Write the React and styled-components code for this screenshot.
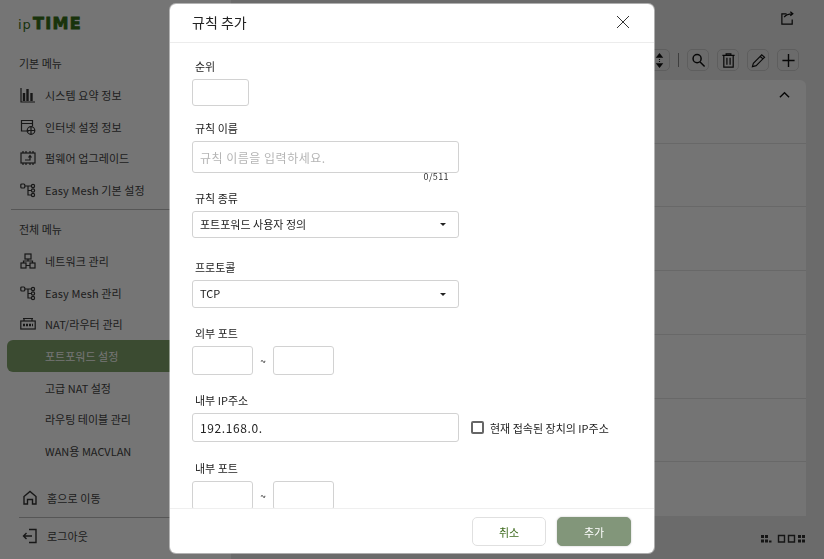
import React from "react";
import styled, { createGlobalStyle } from "styled-components";

const GlobalStyle = createGlobalStyle`
  html, body {
    margin: 0;
    height: 100%;
    overflow: hidden;
  }
  body, input {
    font-family: "Noto Sans CJK KR", "Noto Sans", sans-serif;
  }
  #root {
    height: 100%;
  }
  * {
    box-sizing: border-box;
  }
`;

const Page = styled.div`
  display: flex;
  height: 559px;
  width: 824px;
  background: #eaeaea;
  overflow: hidden;
`;

const Sidebar = styled.aside`
  width: 231px;
  flex: none;
  background: #fff;
  display: flex;
  flex-direction: column;
  > * {
    flex: none;
  }
`;

const Logo = styled.div`
  display: flex;
  align-items: baseline;
  height: 30px;
  margin: 9px 0 0 18px;
  color: #37701a;
  line-height: 30px;
`;

const LogoThin = styled.span`
  font-family: "DejaVu Sans", sans-serif;
  font-size: 13px;
  letter-spacing: 1px;
  width: 15px;
`;

const LogoBold = styled.span`
  font-family: "DejaVu Sans", sans-serif;
  font-size: 16px;
  font-weight: 700;
  letter-spacing: 1.3px;
  -webkit-text-stroke: 0.8px #37701a;
`;

const MenuTitle = styled.div`
  font-size: 11px;
  line-height: 16px;
  color: #444;
  margin: ${(p) => p.$top}px 0 8px 19px;
`;

const MenuItem = styled.div`
  display: flex;
  align-items: center;
  gap: 9px;
  height: 31.7px;
  padding-left: ${(p) => p.$pad || 20}px;
  font-size: 11px;
  color: #444;
  letter-spacing: 0.1px;
  svg {
    width: 16px;
    height: 16px;
    flex: none;
  }
`;

const SubItem = styled.div`
  display: flex;
  align-items: center;
  height: 31.6px;
  margin-left: 7px;
  padding-left: 38px;
  font-size: 11px;
  border-radius: 6px 0 0 6px;
  color: ${(p) => (p.$active ? "#fff" : "#444")};
  background: ${(p) => (p.$active ? "#80a36c" : "transparent")};
`;

const SideDivider = styled.hr`
  border: 0;
  border-top: 1px solid #bbb;
  margin: ${(p) => p.$top}px 0 ${(p) => p.$bottom || 0}px ${(p) => p.$left}px;
`;

const SideBottom = styled.div`
  margin-top: 15.2px;
`;

const Main = styled.main`
  flex: 1;
  min-width: 0;
  padding: 10px 18px 0 12px;
  display: flex;
  flex-direction: column;
  > * {
    flex: none;
  }
`;

const TopBar = styled.div`
  height: 39px;
  display: flex;
  justify-content: flex-end;
  padding: 1px 11px 0 0;
  svg {
    width: 15px;
    height: 15px;
  }
`;

const Toolbar = styled.div`
  height: 22px;
  display: flex;
  justify-content: flex-end;
  align-items: center;
  gap: 8px;
  padding-right: 7px;
`;

const ToolButton = styled.button`
  width: 22px;
  height: 22px;
  padding: 0;
  display: flex;
  align-items: center;
  justify-content: center;
  background: transparent;
  border: 1px solid #ccc;
  border-radius: 5px;
  svg {
    width: 15px;
    height: 15px;
  }
`;

const ToolSeparator = styled.span`
  width: 1px;
  height: 14px;
  background: #888;
`;

const Card = styled.section`
  margin-top: 9px;
  height: 436px;
  background: #fdfdfd;
  border-radius: 6px 6px 0 0;
  display: flex;
  flex-direction: column;
  overflow: hidden;
  > * {
    flex: none;
  }
`;

const CardHead = styled.div`
  height: 63.5px;
  display: flex;
  justify-content: flex-end;
  padding: 9px 15px 0 0;
  border-bottom: 1px solid #e2e2e2;
  svg {
    width: 13px;
    height: 11px;
  }
`;

const CardRow = styled.div`
  height: 63.8px;
  border-bottom: 1px solid #e2e2e2;
  &:last-child {
    border-bottom: 0;
  }
`;

const Pager = styled.div`
  display: flex;
  justify-content: flex-end;
  margin-top: 18px;
  svg {
    width: 46px;
    height: 10px;
  }
`;

const Overlay = styled.div`
  position: fixed;
  inset: 0;
  background: rgba(0, 0, 0, 0.54);
  display: flex;
  justify-content: center;
  align-items: flex-start;
  padding-top: 4px;
`;

const Modal = styled.div`
  width: 484px;
  height: 549px;
  background: #fff;
  border-radius: 6px;
  box-shadow: 0 0 0 1px rgba(255, 255, 255, 0.45);
  display: flex;
  flex-direction: column;
  overflow: hidden;
`;

const ModalHead = styled.header`
  height: 39px;
  flex: none;
  display: flex;
  align-items: center;
  justify-content: space-between;
  padding: 0 24px 0 22px;
  border-bottom: 1px solid #ececec;
`;

const ModalTitle = styled.h2`
  margin: 0 0 2px;
  font-size: 14px;
  font-weight: 400;
  color: #222;
`;

const CloseIcon = styled.svg`
  width: 14px;
  height: 14px;
  margin-top: -3px;
`;

const ModalBody = styled.div`
  flex: 1;
  min-height: 0;
  overflow: hidden;
  padding: 16px 0 0 22px;
`;

const Field = styled.div`
  margin-bottom: ${(p) => p.$gap}px;
`;

const Label = styled.div`
  font-size: 11px;
  line-height: 14px;
  margin: 0 0 6px 3px;
  color: #222;
`;

const TextBox = styled.input`
  display: block;
  width: ${(p) => p.$w}px;
  height: ${(p) => p.$h}px;
  padding: 0 7px;
  border: 1px solid #d2d2d2;
  border-radius: 3px;
  background: #fff;
  outline: none;
  font-size: ${(p) => p.$fs || 11}px;
  letter-spacing: ${(p) => p.$ls || 0}px;
  color: #222;
  &::placeholder {
    color: #b5b5b5;
    opacity: 1;
  }
`;

const Counter = styled.div`
  width: 257px;
  text-align: right;
  font-size: 9px;
  line-height: 10px;
  letter-spacing: 0.4px;
  margin-top: -1px;
  color: #333;
`;

const SelectBox = styled.div`
  width: 267px;
  height: ${(p) => p.$h}px;
  display: flex;
  align-items: center;
  justify-content: space-between;
  padding: 0 12px 2px 7px;
  border: 1px solid #d2d2d2;
  border-radius: 3px;
  font-size: 11px;
  color: #222;
`;

const Caret = styled.span`
  width: 0;
  height: 0;
  margin-top: 2px;
  border-left: 3.5px solid transparent;
  border-right: 3.5px solid transparent;
  border-top: 3.5px solid #222;
`;

const PortRow = styled.div`
  display: flex;
  align-items: center;
`;

const Tilde = styled.span`
  width: 20px;
  text-align: center;
  font-size: 10px;
  color: #222;
`;

const CheckWrap = styled.label`
  display: flex;
  align-items: center;
  margin-left: 12px;
  font-size: 11px;
  color: #222;
`;

const CheckBox = styled.span`
  width: 13px;
  height: 13px;
  margin-right: 6px;
  border: 2px solid #666;
  border-radius: 2px;
`;

const ModalFoot = styled.footer`
  height: 45px;
  flex: none;
  display: flex;
  justify-content: flex-end;
  align-items: flex-start;
  gap: 11px;
  padding: 8px 23px 0 0;
  border-top: 1px solid #efefef;
`;

const FootButton = styled.button`
  width: 74px;
  height: 29px;
  padding: 0;
  border-radius: 5px;
  font-family: inherit;
  font-size: 11px;
  border: 1px solid ${(p) => (p.$primary ? "#82967a" : "#e0e0e0")};
  background: ${(p) => (p.$primary ? "#82967a" : "#fff")};
  color: ${(p) => (p.$primary ? "#fff" : "#3d6a1c")};
  box-shadow: ${(p) => (p.$primary ? "0 0 2px rgba(0,0,0,.25)" : "none")};
`;

const Line = ({ children, sw = 1.2, color = "#333" }) => (
  <svg viewBox="0 0 16 16" fill="none" stroke={color} strokeWidth={sw}>
    {children}
  </svg>
);

const BarsIcon = () => (
  <Line>
    <path d="M1 1v14h14" />
    <path d="M4 14V6M7.5 14V2M11.5 14V6" strokeWidth="2.4" />
  </Line>
);

const GlobeIcon = () => (
  <Line>
    <path d="M9 12H1.5V1.5h11V7M1.5 4.5h11" />
    <circle cx="11" cy="11.5" r="3.8" />
    <path d="M7.2 11.5h7.6M11 7.7v7.6" />
  </Line>
);

const FirmwareIcon = () => (
  <Line>
    <rect x="1" y="3" width="14" height="10" />
    <path d="M3 1v2M6 1v2M10 1v2M13 1v2M3 13v2M6 13v2M10 13v2M13 13v2M5 10h5V6M8.5 7.5 10 5.5l1.5 2" />
  </Line>
);

const MeshIcon = () => (
  <Line>
    <rect x="0.8" y="2" width="4" height="4" rx="1" />
    <path d="M5 4h6M8 4v9h4M8 8.500h4" />
    <circle cx="13" cy="4" r="1.6" />
    <circle cx="13" cy="8.500" r="1.6" />
    <circle cx="13" cy="13" r="1.6" />
  </Line>
);

const NetworkIcon = () => (
  <Line>
    <rect x="5" y="1" width="6" height="5" />
    <rect x="1" y="10" width="5" height="5" />
    <rect x="10" y="10" width="5" height="5" />
    <path d="M8 6v2M3.500 10V8h9v2M6 12.500h4" />
  </Line>
);

const NatIcon = () => (
  <Line>
    <rect x="0.8" y="5" width="14.400" height="8" />
    <path d="M3 2.500h10M4 2.500V5M12 2.500V5" />
    <path d="M3 9h10" strokeWidth="2.400" strokeDasharray="2 1" />
  </Line>
);

const HomeIcon = () => (
  <Line sw={1.4}>
    <path d="M2 14V6.500L8 1.500l6 5V14h-3.500V9.500h-5V14z" />
  </Line>
);

const LogoutIcon = () => (
  <Line sw={1.4}>
    <path d="M7 1.500h7v13H7M10 8H1.500M4.500 5 1.500 8l3 3" />
  </Line>
);

const ShareIcon = () => (
  <Line sw={1.3} color="#111">
    <path d="M7 3H2v11h11V9M4.500 6.500C6 4 8 3 13.500 3M11 .8l2.700 2.200L11 5.200" />
  </Line>
);

const SortIcon = () => (
  <svg viewBox="0 0 16 16" fill="#111">
    <path d="M8 0l4 5H4zM8 16l-4-5h8z" />
    <path d="M7.400 6.500h1.200v1H7.400zM7.400 8.500h1.200v1H7.400z" />
  </svg>
);

const SearchIcon = () => (
  <Line sw={1.6} color="#111">
    <circle cx="6.500" cy="6" r="4.300" />
    <path d="M9.700 9.500l4.800 4.800" />
  </Line>
);

const TrashIcon = () => (
  <Line sw={1.3} color="#111">
    <path d="M1.500 2.500h13M3 2.500V15h10V2.500M5.500 2.500V1h5v1.500M6.300 5v7.500M9.700 5v7.500" />
  </Line>
);

const PencilIcon = () => (
  <Line sw={1.2} color="#111">
    <path d="M1.500 14.500l1-3.500L11.500 2l3 2.500-9 9zM9.800 3.700l3 2.600" />
  </Line>
);

const PlusIcon = () => (
  <Line sw={1.5} color="#111">
    <path d="M8 1v14M1.500 8h13" />
  </Line>
);

const ChevronUpIcon = () => (
  <svg viewBox="0 0 14 12" fill="none" stroke="#111" strokeWidth="1.500">
    <path d="M2 9l5-5 5 5" />
  </svg>
);

const PagerIcon = () => (
  <svg viewBox="0 0 46 10" fill="#2f2f2f">
    <path d="M1 1h3v3H1zM5 1h3v3H5zM1 5.500h3v3H1zM5 5.500h3v3H5zM9 6.500h2.500v2H9z" />
    <path
      d="M18.500 1.500h6v6.500h-6zM28.500 1.500h6v6.500h-6z"
      fill="none"
      stroke="#2f2f2f"
      strokeWidth="1.400"
    />
    <path d="M38 1h3v3h-3zM42 1h3v3h-3zM38 5.500h3v3h-3zM42 5.500h3v3h-3z" />
  </svg>
);

const basicMenu = [
  { label: "시스템 요약 정보", icon: <BarsIcon /> },
  { label: "인터넷 설정 정보", icon: <GlobeIcon /> },
  { label: "펌웨어 업그레이드", icon: <FirmwareIcon /> },
  { label: "Easy Mesh 기본 설정", icon: <MeshIcon /> },
];

const fullMenu = [
  { label: "네트워크 관리", icon: <NetworkIcon /> },
  { label: "Easy Mesh 관리", icon: <MeshIcon /> },
  { label: "NAT/라우터 관리", icon: <NatIcon /> },
];

const natMenu = ["포트포워드 설정", "고급 NAT 설정", "라우팅 테이블 관리", "WAN용 MACVLAN"];

const App = () => {
  return (
    <>
      <GlobalStyle />
      <Page>
        <Sidebar>
          <Logo>
            <LogoThin>ip</LogoThin>
            <LogoBold>TIME</LogoBold>
          </Logo>
          <MenuTitle $top={16}>기본 메뉴</MenuTitle>
          {basicMenu.map((item) => (
            <MenuItem key={item.label}>
              {item.icon}
              {item.label}
            </MenuItem>
          ))}
          <SideDivider $top={3} $left={11} />
          <MenuTitle $top={11.4}>전체 메뉴</MenuTitle>
          {fullMenu.map((item) => (
            <MenuItem key={item.label}>
              {item.icon}
              {item.label}
            </MenuItem>
          ))}
          {natMenu.map((label, index) => (
            <SubItem key={label} $active={index === 0}>
              {label}
            </SubItem>
          ))}
          <SideBottom>
            <MenuItem $pad={22}>
              <HomeIcon />
              홈으로 이동
            </MenuItem>
            <SideDivider $top={4} $bottom={2} $left={19} />
            <MenuItem $pad={22}>
              <LogoutIcon />
              로그아웃
            </MenuItem>
          </SideBottom>
        </Sidebar>

        <Main>
          <TopBar>
            <ShareIcon />
          </TopBar>
          <Toolbar>
            <ToolButton>
              <SortIcon />
            </ToolButton>
            <ToolSeparator />
            <ToolButton>
              <SearchIcon />
            </ToolButton>
            <ToolButton>
              <TrashIcon />
            </ToolButton>
            <ToolButton>
              <PencilIcon />
            </ToolButton>
            <ToolButton>
              <PlusIcon />
            </ToolButton>
          </Toolbar>
          <Card>
            <CardHead>
              <ChevronUpIcon />
            </CardHead>
            {[0, 1, 2, 3, 4, 5].map((row) => (
              <CardRow key={row} />
            ))}
          </Card>
          <Pager>
            <PagerIcon />
          </Pager>
        </Main>

        <Overlay>
          <Modal>
            <ModalHead>
              <ModalTitle>규칙 추가</ModalTitle>
              <CloseIcon viewBox="0 0 14 14" fill="none" stroke="#333" strokeWidth="1">
                <path d="M1 1l12 12M13 1L1 13" />
              </CloseIcon>
            </ModalHead>
            <ModalBody>
              <Field $gap={15}>
                <Label>순위</Label>
                <TextBox $w={57} $h={27} readOnly />
              </Field>
              <Field $gap={9}>
                <Label>규칙 이름</Label>
                <TextBox
                  $w={267}
                  $h={32}
                  $fs={12}
                  $ls={0.5}
                  readOnly
                  placeholder="규칙 이름을 입력하세요."
                />
                <Counter>0/511</Counter>
              </Field>
              <Field $gap={22}>
                <Label>규칙 종류</Label>
                <SelectBox $h={27}>
                  포트포워드 사용자 정의
                  <Caret />
                </SelectBox>
              </Field>
              <Field $gap={18}>
                <Label>프로토콜</Label>
                <SelectBox $h={28}>
                  TCP
                  <Caret />
                </SelectBox>
              </Field>
              <Field $gap={18}>
                <Label>외부 포트</Label>
                <PortRow>
                  <TextBox $w={61} $h={29} readOnly />
                  <Tilde>~</Tilde>
                  <TextBox $w={61} $h={29} readOnly />
                </PortRow>
              </Field>
              <Field $gap={19}>
                <Label>내부 IP주소</Label>
                <PortRow>
                  <TextBox $w={267} $h={29} $fs={12} $ls={0.6} readOnly value="192.168.0." />
                  <CheckWrap>
                    <CheckBox />
                    현재 접속된 장치의 IP주소
                  </CheckWrap>
                </PortRow>
              </Field>
              <Field $gap={16}>
                <Label>내부 포트</Label>
                <PortRow>
                  <TextBox $w={61} $h={29} readOnly />
                  <Tilde>~</Tilde>
                  <TextBox $w={61} $h={29} readOnly />
                </PortRow>
              </Field>
            </ModalBody>
            <ModalFoot>
              <FootButton>취소</FootButton>
              <FootButton $primary>추가</FootButton>
            </ModalFoot>
          </Modal>
        </Overlay>
      </Page>
    </>
  );
};

export default App;
